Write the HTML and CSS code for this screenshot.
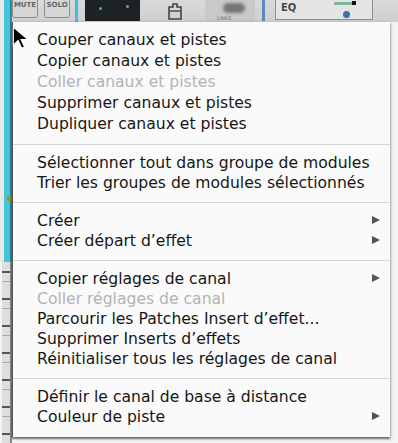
FILE: index.html
```html
<!DOCTYPE html>
<html lang="fr">
<head>
  <meta charset="UTF-8" />
  <meta name="viewport" content="width=device-width, initial-scale=1.0"/>
  <title>Menu contextuel de la table de mixage</title>
  <link rel="stylesheet" href="styles.css">
</head>
<body>
  <!-- mixer behind the menu -->
  <div class="side">
    <div class="side-cyan"><i class="mark"></i></div>
    <div class="side-gray"></div>
  </div>

  <div class="main">
    <div class="strip-top">
      <div class="btn">MUTE</div>
      <div class="btn solo">SOLO</div>
      <span class="cyan-line"></span>
      <div class="meter"><i class="dot teal"></i><i class="dot orange"></i></div>
      <div class="clip">
        <svg width="16" height="18" viewBox="0 0 16 18">
          <path d="M6 2h4v3h4v12H2V5h4z" fill="none" stroke="#444" stroke-width="1.6"/>
          <path d="M3 9h10" stroke="#444" stroke-width="1.4"/>
        </svg>
      </div>
      <div class="links"><span class="blob"></span><small>LINKS</small></div>
      <span class="blue-line"></span>
      <div class="eq">
        <span class="eq-label">EQ</span>
        <span class="eq-bar"></span>
        <span class="eq-dot"></span>
        <span class="eq-knob"></span>
      </div>
    </div>
    <div class="canvas"></div>
  </div>

  <!-- context menu -->
  <ul class="menu">
    <li class="item tall">Couper canaux et pistes</li>
    <li class="item tall">Copier canaux et pistes</li>
    <li class="item tall disabled">Coller canaux et pistes</li>
    <li class="item tall">Supprimer canaux et pistes</li>
    <li class="item tall">Dupliquer canaux et pistes</li>
    <li class="sep"></li>
    <li class="item">Sélectionner tout dans groupe de modules</li>
    <li class="item">Trier les groupes de modules sélectionnés</li>
    <li class="sep"></li>
    <li class="item sub">Créer</li>
    <li class="item sub">Créer départ d’effet</li>
    <li class="sep"></li>
    <li class="item sub">Copier réglages de canal</li>
    <li class="item disabled">Coller réglages de canal</li>
    <li class="item">Parcourir les Patches Insert d’effet...</li>
    <li class="item">Supprimer Inserts d’effets</li>
    <li class="item">Réinitialiser tous les réglages de canal</li>
    <li class="sep"></li>
    <li class="item">Définir le canal de base à distance</li>
    <li class="item sub">Couleur de piste</li>
  </ul>

  <svg class="cursor" width="17" height="24" viewBox="0 0 14 20">
    <path d="M1 1v15l4-4 3 6.5 2.4-1-3-6.3H13z" fill="#000" stroke="#fff" stroke-width="0.9"/>
  </svg>
</body>
</html>
```

FILE: styles.css
```css
body {
  margin: 0;
  width: 398px;
  height: 443px;
  overflow: hidden;
  position: relative;
  display: flex;
  background: #f1f1f1;
  font-family: "DejaVu Sans", "Liberation Sans", sans-serif;
}

/* left edge of the mixer */
.side {
  width: 12px;
  display: flex;
  flex-direction: column;
}

.side-cyan {
  height: 262px;
  position: relative;
  background: linear-gradient(to right, #e9e9e9 0 4px, #43c6dc 4px 10px, #2b7f8e 10px 11px, #777 11px 12px);
}

.side-cyan .mark {
  position: absolute;
  left: 7px;
  top: 196px;
  width: 4px;
  height: 5px;
  background: #8a9a2a;
}

.side-gray {
  flex: 1;
  background:
    repeating-linear-gradient(to bottom, transparent 0 9px, #555 9px 11px, transparent 11px 19px, #aaa 19px 20px, transparent 20px 27px),
    linear-gradient(to right, #f4f4f4 0 2px, #dedede 2px 10px, #888 10px 12px);
  background-size: 8px 100%, 100% 100%;
  background-position: 2px 0, 0 0;
  background-repeat: no-repeat;
}

.main {
  flex: 1;
  display: flex;
  flex-direction: column;
}

/* strip of mixer controls above the menu */
.strip-top {
  height: 22px;
  display: flex;
  align-items: flex-start;
  background: linear-gradient(#d9d9d9, #cfcfcf);
}

.btn {
  width: 24px;
  height: 18px;
  margin-top: -2px;
  border: 1px solid #8d8d8d;
  border-radius: 0 0 3px 3px;
  background: #d6d6d6;
  color: #666;
  font-size: 7px;
  font-weight: bold;
  line-height: 12px;
  text-align: center;
}

.btn.solo {
  margin-left: 6px;
}

.cyan-line {
  width: 3px;
  height: 22px;
  margin-left: 5px;
  background: #39c2dc;
}

.meter {
  width: 55px;
  height: 21px;
  margin-left: 7px;
  position: relative;
  background: #1d2226;
}

.dot {
  position: absolute;
  width: 3px;
  height: 3px;
  border-radius: 50%;
}

.dot.teal {
  left: 14px;
  top: 7px;
  background: #34b7c7;
}

.dot.orange {
  left: 41px;
  top: 5px;
  background: #c4893a;
}

.clip {
  width: 16px;
  height: 20px;
  margin-left: 27px;
  padding-top: 2px;
  box-sizing: border-box;
}

.links {
  width: 50px;
  height: 22px;
  margin-left: 22px;
  position: relative;
  background: #c9c9c9;
}

.links .blob {
  position: absolute;
  left: 18px;
  top: 3px;
  width: 22px;
  height: 10px;
  border-radius: 5px;
  background: #777;
  filter: blur(1.5px);
}

.links small {
  position: absolute;
  left: 12px;
  top: 15px;
  font-size: 5px;
  color: #777;
}

.blue-line {
  width: 3px;
  height: 21px;
  margin-left: 7px;
  background: #5b86c2;
}

.eq {
  width: 96px;
  height: 19px;
  margin-left: 10px;
  position: relative;
  border: 1px solid #8f8f8f;
  border-top: none;
  background: #e4e4e4;
}

.eq-label {
  position: absolute;
  left: 5px;
  top: 2px;
  font-size: 10px;
  font-weight: bold;
  color: #444;
}

.eq-bar {
  position: absolute;
  left: 58px;
  top: 2px;
  width: 18px;
  height: 3px;
  background: #7fb59a;
}

.eq-dot {
  position: absolute;
  left: 76px;
  top: 1px;
  width: 4px;
  height: 4px;
  background: #111;
}

.eq-knob {
  position: absolute;
  left: 67px;
  top: 11px;
  width: 7px;
  height: 7px;
  border-radius: 50%;
  background: #3e6fb4;
}

.canvas {
  flex: 1;
  background: #f3f3f3;
}

/* context menu */
.menu {
  position: absolute;
  left: 12px;
  top: 22px;
  width: 377px;
  margin: 0;
  padding: 8px 0 10px;
  list-style: none;
  background: #fafafa;
  border-left: 1px solid #555;
  box-shadow: 0 2px 2px rgba(0, 0, 0, 0.55), 1px 0 3px rgba(0, 0, 0, 0.15);
  font-size: 15.6px;
  color: #161616;
}

.item {
  position: relative;
  height: 20px;
  line-height: 20px;
  padding-left: 24px;
  white-space: nowrap;
}

.item.tall {
  height: 21px;
  line-height: 21px;
}

.item.disabled {
  color: #b3b3b3;
}

.item.sub::after {
  content: "";
  position: absolute;
  right: 10px;
  top: 5px;
  border-left: 8px solid #555;
  border-top: 4.5px solid transparent;
  border-bottom: 4.5px solid transparent;
}

.sep {
  height: 1px;
  margin: 9px 0 8px;
  background: #d6d6d6;
}

.cursor {
  position: absolute;
  left: 12px;
  top: 26px;
}
```
